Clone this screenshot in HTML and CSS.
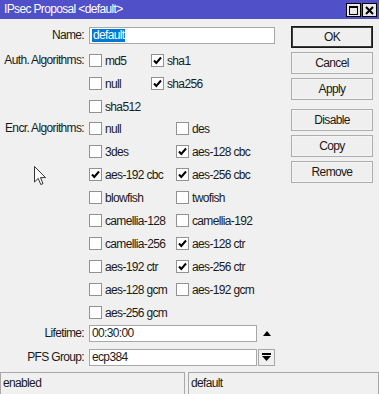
FILE: index.html
```html
<!DOCTYPE html>
<html>
<head>
<meta charset="utf-8">
<link rel="stylesheet" href="styles.css">
</head>
<body>
<div class="window">
  <div class="titlebar">
    <span class="title">IPsec Proposal &lt;default&gt;</span>
    <div class="wbtns">
      <span class="wbtn"><svg width="9" height="9" viewBox="0 0 9 9"><rect x="0.5" y="0.5" width="8" height="8" fill="none" stroke="#000"/><rect x="0" y="0" width="9" height="2" fill="#000"/></svg></span>
      <span class="wbtn"><svg width="9" height="9" viewBox="0 0 9 9"><path d="M1 1 L8 8 M8 1 L1 8" stroke="#000" stroke-width="2"/></svg></span>
    </div>
  </div>
  <div class="main">
    <div class="form">
      <div class="field name-field">
        <div class="lbl">Name:</div>
        <div class="input name-input"><span class="sel">default</span></div>
      </div>
      <div class="field group auth">
        <div class="lbl">Auth. Algorithms:</div>
        <div class="checks auth-grid">
          <div class="chk"><span class="box"></span><span>md5</span></div>
          <div class="chk"><span class="box on"><svg width="11" height="11" viewBox="0 0 11 11"><path d="M2 5.5 L4.3 8 L9 2.5" fill="none" stroke="#000" stroke-width="2"/></svg></span><span>sha1</span></div>
          <div class="chk"><span class="box"></span><span>null</span></div>
          <div class="chk"><span class="box on"><svg width="11" height="11" viewBox="0 0 11 11"><path d="M2 5.5 L4.3 8 L9 2.5" fill="none" stroke="#000" stroke-width="2"/></svg></span><span>sha256</span></div>
          <div class="chk"><span class="box"></span><span>sha512</span></div>
        </div>
      </div>
      <div class="field group encr">
        <div class="lbl">Encr. Algorithms:</div>
        <div class="checks encr-grid">
          <div class="chk"><span class="box"></span><span>null</span></div>
          <div class="chk"><span class="box"></span><span>des</span></div>
          <div class="chk"><span class="box"></span><span>3des</span></div>
          <div class="chk"><span class="box on"><svg width="11" height="11" viewBox="0 0 11 11"><path d="M2 5.5 L4.3 8 L9 2.5" fill="none" stroke="#000" stroke-width="2"/></svg></span><span>aes-128 cbc</span></div>
          <div class="chk"><span class="box on"><svg width="11" height="11" viewBox="0 0 11 11"><path d="M2 5.5 L4.3 8 L9 2.5" fill="none" stroke="#000" stroke-width="2"/></svg></span><span>aes-192 cbc</span></div>
          <div class="chk"><span class="box on"><svg width="11" height="11" viewBox="0 0 11 11"><path d="M2 5.5 L4.3 8 L9 2.5" fill="none" stroke="#000" stroke-width="2"/></svg></span><span>aes-256 cbc</span></div>
          <div class="chk"><span class="box"></span><span>blowfish</span></div>
          <div class="chk"><span class="box"></span><span>twofish</span></div>
          <div class="chk"><span class="box"></span><span>camellia-128</span></div>
          <div class="chk"><span class="box"></span><span>camellia-192</span></div>
          <div class="chk"><span class="box"></span><span>camellia-256</span></div>
          <div class="chk"><span class="box on"><svg width="11" height="11" viewBox="0 0 11 11"><path d="M2 5.5 L4.3 8 L9 2.5" fill="none" stroke="#000" stroke-width="2"/></svg></span><span>aes-128 ctr</span></div>
          <div class="chk"><span class="box"></span><span>aes-192 ctr</span></div>
          <div class="chk"><span class="box on"><svg width="11" height="11" viewBox="0 0 11 11"><path d="M2 5.5 L4.3 8 L9 2.5" fill="none" stroke="#000" stroke-width="2"/></svg></span><span>aes-256 ctr</span></div>
          <div class="chk"><span class="box"></span><span>aes-128 gcm</span></div>
          <div class="chk"><span class="box"></span><span>aes-192 gcm</span></div>
          <div class="chk"><span class="box"></span><span>aes-256 gcm</span></div>
        </div>
      </div>
      <div class="field lifetime">
        <div class="lbl">Lifetime:</div>
        <div class="ctl">
          <div class="input short-input">00:30:00</div>
          <span class="up"></span>
        </div>
      </div>
      <div class="field pfs">
        <div class="lbl">PFS Group:</div>
        <div class="ctl">
          <div class="input short-input">ecp384</div>
          <span class="dd"><svg width="9" height="9" viewBox="0 0 9 9"><rect x="0" y="0" width="9" height="2" fill="#000"/><path d="M0 3 H9 L4.5 8 Z" fill="#000"/></svg></span>
        </div>
      </div>
    </div>
    <div class="buttons">
      <div class="btn default">OK</div>
      <div class="btn">Cancel</div>
      <div class="btn">Apply</div>
      <div class="btn sep">Disable</div>
      <div class="btn">Copy</div>
      <div class="btn">Remove</div>
    </div>
  </div>
  <div class="status">
    <div class="panel p1">enabled</div>
    <div class="panel p2">default</div>
  </div>
  <svg class="cursor" width="13" height="20" viewBox="0 0 13 20"><path d="M0.5 0.5 V16 L4.2 12.4 L6.8 18.5 L9 17.6 L6.5 11.6 L11.5 11.6 Z" fill="#fff" stroke="#333" stroke-width="1"/></svg>
</div>
</body>
</html>
```

FILE: styles.css
```css
html, body {
  margin: 0;
  padding: 0;
}
body {
  background: #f0f0f0;
  font-family: "Liberation Sans", Arial, sans-serif;
  font-size: 12px;
  letter-spacing: -0.65px;
  color: #1a1a1a;
}
.window {
  position: relative;
  width: 379px;
  height: 394px;
  overflow: hidden;
  background: #f0f0f0;
}
.titlebar {
  height: 19px;
  background: #5050c8;
  color: #fff;
  display: flex;
  justify-content: space-between;
  align-items: flex-start;
  padding: 0 2px 0 4px;
}
.title {
  line-height: 19px;
}
.wbtns {
  display: flex;
  gap: 1px;
  margin-top: 3px;
}
.wbtn {
  width: 13px;
  height: 12px;
  border: 1px solid #000;
  background: #e8e8e8;
  display: flex;
  align-items: center;
  justify-content: center;
}
.main {
  display: flex;
  height: 353px;
}
.form {
  width: 291px;
  padding-top: 8px;
  box-sizing: border-box;
}
.field {
  display: grid;
  grid-template-columns: 84px auto;
  column-gap: 5px;
}
.lbl {
  text-align: right;
  white-space: nowrap;
}
.name-field .lbl { line-height: 17px; }
.input {
  box-sizing: border-box;
  height: 17px;
  border: 1px solid #a8a8a8;
  background: #fff;
  line-height: 15px;
  padding-left: 2px;
  white-space: nowrap;
}
.name-input { width: 186px; }
.sel {
  background: #0078d7;
  color: #fff;
  display: inline-block;
  line-height: 13px;
  padding: 0 1px;
}
.group .lbl { line-height: 23px; }
.auth { margin-top: 5px; }
.encr { margin-top: -1px; }
.checks {
  display: grid;
  grid-auto-rows: 23px;
}
.auth-grid { grid-template-columns: 62px 62px; }
.encr-grid { grid-template-columns: 87px 100px; }
.chk {
  display: flex;
  align-items: center;
  gap: 3px;
  white-space: nowrap;
}
.box {
  box-sizing: border-box;
  width: 13px;
  height: 13px;
  border: 1px solid #929292;
  background: #fff;
  display: flex;
  align-items: center;
  justify-content: center;
  flex: none;
}
.lifetime { margin-top: 1px; }
.pfs { margin-top: 7px; }
.lifetime .lbl, .pfs .lbl { line-height: 17px; }
.ctl {
  display: flex;
  align-items: center;
}
.short-input { width: 168px; }
.up {
  margin-left: 6px;
  width: 0;
  height: 0;
  border-left: 4.5px solid transparent;
  border-right: 4.5px solid transparent;
  border-bottom: 5px solid #000;
}
.dd {
  box-sizing: border-box;
  width: 17px;
  height: 17px;
  margin-left: 1px;
  border: 1px solid #a8a8a8;
  background: #f0f0f0;
  display: flex;
  align-items: center;
  justify-content: center;
}
.buttons {
  width: 82px;
  padding-top: 7px;
  display: flex;
  flex-direction: column;
  gap: 4px;
}
.btn {
  box-sizing: border-box;
  height: 22px;
  border: 1px solid #adadad;
  box-shadow: inset 0 0 0 1px #f4f4f4;
  background: #efefef;
  text-align: center;
  line-height: 20px;
}
.btn.default {
  border: 1px solid #1a1a1a;
  box-shadow: inset 0 0 0 1px #3c3c3c;
}
.btn.sep { margin-top: 5px; }
.status {
  display: flex;
  gap: 3px;
  height: 22px;
}
.panel {
  box-sizing: border-box;
  height: 22px;
  border: 1px solid #a8a8a8;
  border-bottom: none;
  padding-left: 2px;
  line-height: 20px;
  white-space: nowrap;
}
.p1 { width: 185px; }
.p2 { flex: 1; }
.cursor {
  position: absolute;
  left: 34px;
  top: 166px;
}
```
